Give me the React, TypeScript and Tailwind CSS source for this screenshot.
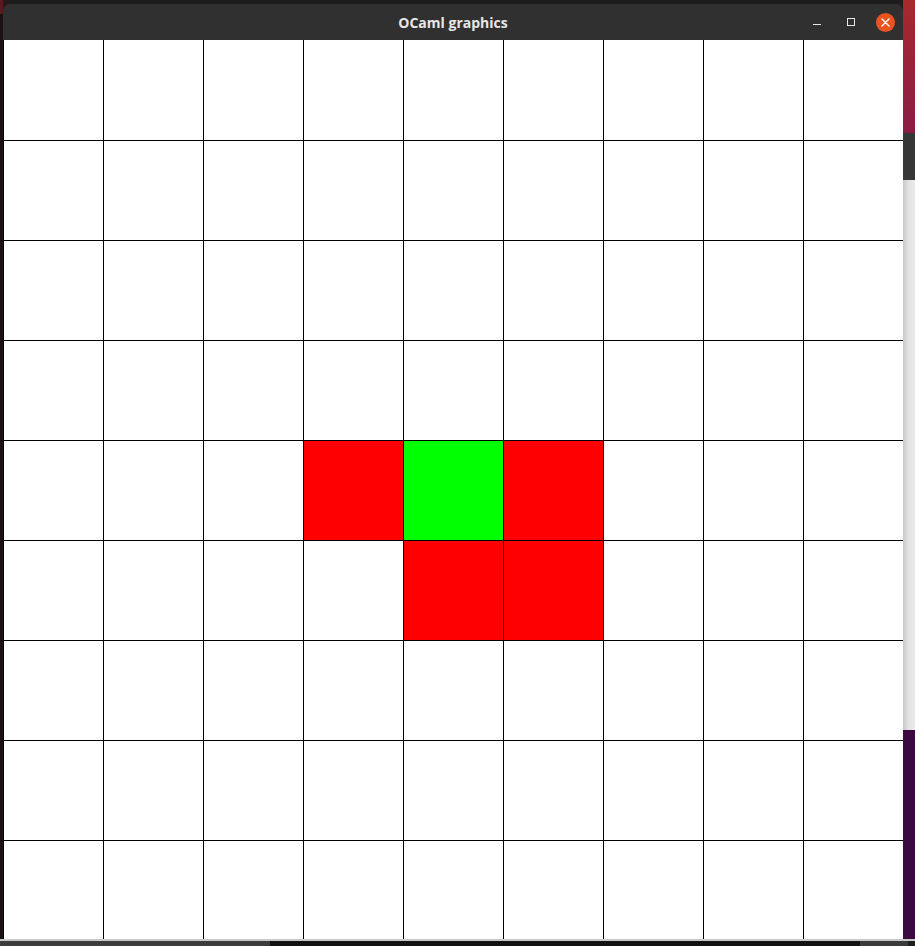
import React from "react";

const COLORED: Record<string, string> = {
  "4-3": "bg-[#ff0000]",
  "4-4": "bg-[#00ff00]",
  "4-5": "bg-[#ff0000]",
  "5-4": "bg-[#ff0000]",
  "5-5": "bg-[#ff0000]",
};

function Cell({ r, c }: { r: number; c: number }) {
  const fill = COLORED[`${r}-${c}`] ?? "bg-white";
  const top = r === 0 ? "border-t-0" : "border-t";
  return <div className={`h-[100px] w-[100px] shrink-0 border-l border-black ${top} ${fill}`} />;
}

export default function App() {
  const rows = Array.from({ length: 9 }, (_, i) => i);
  return (
    <div className="flex h-[946px] w-[915px] flex-col overflow-hidden bg-[#1d1d1d]">
      <div className="flex h-[939px] shrink-0">
        {/* left desktop sliver */}
        <div className="flex w-[3px] shrink-0 flex-col">
          <div className="h-[14px] bg-[#5a1a1c]" />
          <div className="flex-1 bg-[#1c1216]" />
        </div>
        {/* window */}
        <div className="flex w-[900px] shrink-0 flex-col bg-[#1d1d1d]">
          <div className="h-[4px] shrink-0 bg-[#1d1d1d]" />
          <div className="relative flex h-[36px] shrink-0 items-center justify-center rounded-t-[7px] bg-[#303030]">
            <span
              className="text-[14px] font-bold text-[#e8e6e3]"
              style={{ fontFamily: '"Open Sans", "Noto Sans", sans-serif' }}
            >
              OCaml graphics
            </span>
            <div className="absolute right-[1px] top-0 flex h-full items-center">
              <div className="flex h-full w-[34px] items-center justify-center">
                <div className="mt-[5px] h-[1px] w-[8px] bg-[#e8e6e3]" />
              </div>
              <div className="flex h-full w-[34px] items-center justify-center">
                <div className="mb-[1px] h-[8px] w-[8px] border border-[#e8e6e3]" />
              </div>
              <div className="flex h-full w-[34px] items-center justify-center">
                <div className="flex h-[19px] w-[19px] items-center justify-center rounded-full bg-[#e95420]">
                  <svg width="9" height="9" viewBox="0 0 9 9">
                    <path d="M1 1 L8 8 M8 1 L1 8" stroke="#ffffff" strokeWidth="1.4" strokeLinecap="round" />
                  </svg>
                </div>
              </div>
            </div>
          </div>
          <div className="h-[899px] shrink-0 overflow-hidden bg-white">
            {rows.map((r) => (
              <div key={r} className="flex">
                {rows.map((c) => (
                  <Cell key={c} r={r} c={c} />
                ))}
              </div>
            ))}
          </div>
        </div>
        {/* right desktop sliver */}
        <div className="flex flex-1 flex-col">
          <div className="h-[133px] shrink-0 bg-gradient-to-b from-[#a8282c] to-[#8a1c44]" />
          <div className="h-[47px] shrink-0 bg-[#363636]" />
          <div className="h-[550px] shrink-0 bg-gradient-to-r from-[#c8c8c8] via-[#e4e4e4] to-[#e8e8e8]" />
          <div className="flex-1 bg-[#3a0a40]" />
        </div>
      </div>
      {/* bottom panel edge */}
      <div className="h-[2px] shrink-0 bg-[#c9c9c9]" />
      <div className="flex flex-1">
        <div className="w-[270px] shrink-0 bg-[#3c3c3c]" />
        <div className="w-[590px] shrink-0 bg-[#121212]" />
        <div className="w-[48px] shrink-0 bg-[#3a3a3a]" />
        <div className="flex-1 bg-[#1e1e1e]" />
      </div>
    </div>
  );
}
